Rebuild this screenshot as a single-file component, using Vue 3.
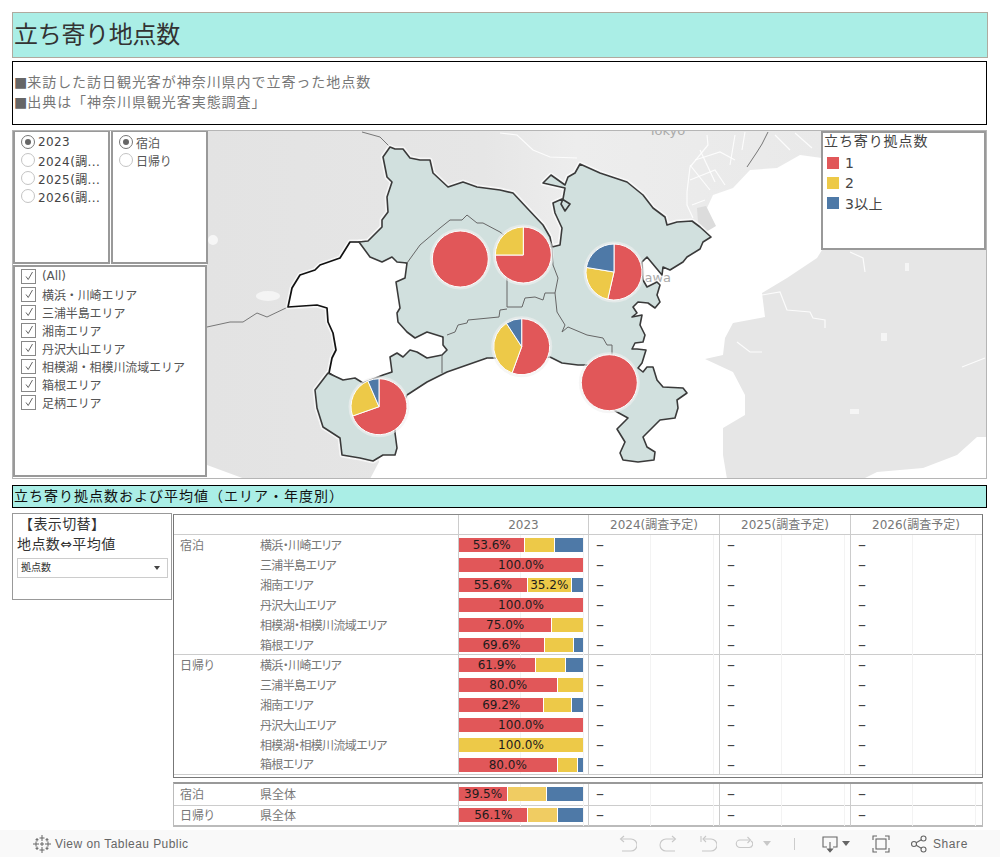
<template>
  <div class="page">
    <div class="dash">
      <h1 class="banner">立ち寄り地点数</h1>

      <div class="desc">
        <p><span class="sq">■</span>来訪した訪日観光客が神奈川県内で立寄った地点数</p>
        <p><span class="sq">■</span>出典は「神奈川県観光客実態調査」</p>
      </div>

      <section class="map">
        <svg class="map-svg" width="975" height="349" viewBox="12 130 975 349">
          <defs>
            <linearGradient id="landGrad" x1="207" x2="822" y1="0" y2="0" gradientUnits="userSpaceOnUse">
              <stop offset="0" stop-color="#e3e3e3" />
              <stop offset="0.45" stop-color="#e6e6e6" />
              <stop offset="0.6" stop-color="#ededed" />
              <stop offset="1" stop-color="#e9e9e9" />
            </linearGradient>
          </defs>
          <rect x="12" y="130" width="975" height="349" fill="#fff" />
          <polygon :points="landWest" fill="url(#landGrad)" />
          <polygon :points="landEast" fill="#e6e6e6" />
          <polygon points="697,208 706,206 716,226 706,232 698,222" fill="#dcdcdc" />
          <polyline v-for="(r, i) in roads" :key="i" :points="r" class="road" />
          <circle cx="213" cy="240" r="5" fill="#f6f6f6" />
          <ellipse cx="268" cy="296" rx="12" ry="5" fill="#f4f4f4" />
          <rect x="881" y="333" width="6" height="8" fill="#f5f5f5" />
          <rect x="850" y="409" width="9" height="5" fill="#f5f5f5" />
          <rect x="905" y="263" width="4" height="8" fill="#f5f5f5" />
          <text x="667" y="135" class="place" text-anchor="middle">Tokyo</text>
          <text x="671" y="282" class="place" text-anchor="end">Kanagawa</text>

          <polyline points="207,327 230,322 243,322 257,313 267,317 288,307" class="border-soft" />
          <polyline points="362,132 380,137 390,147" class="border-soft" />
          <polyline points="747,167 757,152 762,144 768,132" class="border-soft" />

          <polygon :points="whiteArea" class="halo" />
          <polygon :points="kanagawa" class="halo" />
          <polygon :points="whiteArea" fill="#fff" stroke="#111" stroke-width="1.7" stroke-linejoin="round" />
          <polygon :points="kanagawa" fill="#d1e0de" stroke="#3a3a3a" stroke-width="1.6" stroke-linejoin="round" />
          <polyline v-for="(l, i) in regionLines" :key="'l' + i" :points="l" class="region" />

          <g v-for="(p, i) in pies" :key="'p' + i">
            <circle :cx="p.x" :cy="p.y" r="30.5" fill="#f0f0f0" opacity="0.6" />
            <path v-for="s in p.slices" :key="s.color" :d="s.d" :fill="s.color" stroke="#fff" stroke-width="1" />
          </g>
        </svg>

        <div class="filters">
          <div class="filter-top">
            <div class="panel panel-year">
              <label v-for="(y, i) in years" :key="y" class="opt">
                <span class="radio" :class="{ on: i === 0 }"></span>{{ y }}
              </label>
            </div>
            <div class="panel panel-stay">
              <label v-for="(s, i) in stayTypes" :key="s" class="opt opt-stay">
                <span class="radio" :class="{ on: i === 0 }"></span>{{ s }}
              </label>
            </div>
          </div>
          <div class="panel panel-area">
            <label v-for="a in areaFilter" :key="a" class="opt opt-area">
              <span class="check">
                <svg width="12" height="12" viewBox="0 0 12 12"><path d="M3 6.500 5.200 9.500 9.500 2" fill="none" stroke="#666" stroke-width="1" /></svg>
              </span>{{ a }}
            </label>
          </div>
        </div>

        <div class="panel legend">
          <div class="legend-title">立ち寄り拠点数</div>
          <div v-for="l in legend" :key="l.label" class="legend-row">
            <span class="swatch" :style="{ background: l.color }"></span>{{ l.label }}
          </div>
        </div>
      </section>

      <h2 class="section-title">立ち寄り拠点数および平均値（エリア・年度別）</h2>

      <div class="lower">
        <div class="switcher">
          <div class="sw-line sw-head">【表示切替】</div>
          <div class="sw-line">地点数⇔平均値</div>
          <div class="select">拠点数<span class="select-caret"></span></div>
        </div>

        <div class="tables">
          <div class="table table-main">
            <div class="row row-head">
              <div class="cell-label"></div>
              <div v-for="h in yearHeads" :key="h" class="cell-head">{{ h }}</div>
            </div>
            <div v-for="(r, i) in rows" :key="i" class="row" :class="{ 'row-group': i === 6 }">
              <div class="cell-label">
                <span class="stay">{{ r.stay }}</span><span class="area">{{ r.area }}</span>
              </div>
              <div class="cell-val">
                <div class="bar">
                  <span v-for="(s, j) in r.parts" :key="j" class="seg" :style="{ width: s.w + '%', background: s.c }">{{ s.t }}</span>
                </div>
              </div>
              <div v-for="n in 3" :key="n" class="cell-val"><span class="dash-mark">–</span></div>
            </div>
          </div>

          <div class="table table-total">
            <div v-for="(r, i) in totals" :key="i" class="row row-total" :class="{ 'row-group': i === 1 }">
              <div class="cell-label">
                <span class="stay">{{ r.stay }}</span><span class="area">{{ r.area }}</span>
              </div>
              <div class="cell-val">
                <div class="bar">
                  <span v-for="(s, j) in r.parts" :key="j" class="seg" :style="{ width: s.w + '%', background: s.c }">{{ s.t }}</span>
                </div>
              </div>
              <div v-for="n in 3" :key="n" class="cell-val"><span class="dash-mark">–</span></div>
            </div>
          </div>
        </div>
      </div>
    </div>

    <footer class="toolbar">
      <div class="tb-left">
        <svg width="18" height="18" viewBox="0 0 18 18" class="tb-logo">
          <path d="M9 0v6M6.500 3h5M9 12v6M6.500 15h5M0 9h6M3 6.500v5M12 9h6M15 6.500v5M4 3v3.500M2.500 4.700h3M14 3v3.500M12.500 4.700h3M4 11.500V15M2.500 13.300h3M14 11.500V15M12.500 13.300h3M9 7v4M7 9h4" />
        </svg>
        <span>View on Tableau Public</span>
      </div>
      <div class="tb-right">
        <svg class="ic ic-off" width="18" height="18" viewBox="0 0 18 18"><path d="M2 4h10a6 6 0 0 1 0 12H3" /><path d="M5 1 1.500 4 5 7" class="solid" /></svg>
        <svg class="ic ic-off gap-redo" width="18" height="18" viewBox="0 0 18 18"><path d="M16 4H7a6 6 0 0 0 0 12h9" /><path d="M13 1l3.500 3L13 7" class="solid" /></svg>
        <svg class="ic ic-off gap-revert" width="18" height="18" viewBox="0 0 18 18"><path d="M2 1v6M5 4h7a6 6 0 0 1 0 12H3" /><path d="M7 1 4 4l3 3" class="solid" /></svg>
        <svg class="ic ic-off gap-refresh" width="18" height="18" viewBox="0 0 18 18"><path d="M15 5H5a3.500 3.500 0 0 0 0 7.500h9a3.500 3.500 0 0 0 2-6.500" /><path d="M12.500 2l3 3-3 3" class="solid" /></svg>
        <span class="caret caret-off"></span>
        <span class="sep"></span>
        <svg class="ic ic-on gap-down" width="18" height="18" viewBox="0 0 18 18"><path d="M6 12H2V2h14v10h-4M9 7v9" /><path d="M6.500 14 9 17l2.500-3z" class="fill" /></svg>
        <span class="caret caret-on"></span>
        <svg class="ic ic-on gap-full" width="18" height="18" viewBox="0 0 18 18"><path d="M1 5V1h4M13 1h4v4M17 13v4h-4M5 17H1v-4" /><rect x="4" y="4" width="10" height="10" /></svg>
        <svg class="ic ic-on gap-share" width="18" height="18" viewBox="0 0 18 18"><circle cx="4" cy="9" r="2.500" /><circle cx="13.500" cy="3.500" r="2.500" /><circle cx="13.500" cy="14.500" r="2.500" /><path d="M6.200 7.800 11.300 4.800M6.200 10.200l5.100 3" /></svg>
        <span class="share">Share</span>
      </div>
    </footer>
  </div>
</template>

<script setup>
  const RED = '#e15759';
  const YEL = '#edc948';
  const YEL2 = '#f0cc62';
  const BLU = '#4e79a7';

  const years = ['2023', '2024(調...', '2025(調...', '2026(調...'];
  const stayTypes = ['宿泊', '日帰り'];
  const areaFilter = ['(All)', '横浜・川崎エリア', '三浦半島エリア', '湘南エリア', '丹沢大山エリア', '相模湖・相模川流域エリア', '箱根エリア', '足柄エリア'];
  const yearHeads = ['2023', '2024(調査予定)', '2025(調査予定)', '2026(調査予定)'];
  const legend = [
    { label: '1', color: RED },
    { label: '2', color: YEL },
    { label: '3以上', color: BLU }
  ];

  // map outlines, traced in page coordinates
  const landWest = '207,130 822,130 822,158 800,155 777,168 750,170 733,188 713,195 707,208 715,225 680,228 600,300 450,340 350,430 380,450 379,462 370,479 245,479 207,465';
  const landEast = '987,130 987,437 977,437 957,455 923,468 877,472 863,479 727,479 723,455 723,428 745,415 745,395 733,372 705,359 723,355 725,338 733,323 765,317 762,293 787,278 817,258 822,250 987,250';
  const whiteArea = '359,242 350,242 340,258 320,265 315,270 300,275 292,288 288,307 317,305 327,308 328,322 333,333 336,350 332,358 329,373 345,384 363,387 392,378 447,362 452,345 443,337 407,263';
  const kanagawa = '390,147 395,149 403,149 410,158 420,160 430,160 433,173 448,187 463,182 477,187 500,190 513,193 527,208 543,225 550,237 552,247 560,245 562,228 555,213 553,203 562,199 570,204 565,211 561,204 563,199 565,188 543,183 551,175 565,185 568,177 575,173 580,164 600,173 627,182 643,195 653,208 665,217 667,225 677,222 692,221 700,227 711,237 703,242 700,249 687,257 683,262 670,270 663,267 662,275 647,257 642,262 643,280 647,287 657,282 660,285 657,295 660,302 655,308 648,303 638,302 633,307 637,313 632,317 642,315 640,325 645,335 643,342 635,343 632,349 637,349 646,350 642,363 638,368 643,372 647,367 653,367 657,380 663,387 683,388 687,393 677,400 678,408 675,418 660,420 643,437 647,447 655,452 654,460 638,462 623,460 620,453 625,442 617,429 628,418 617,412 600,400 587,365 578,365 562,363 550,357 520,362 500,358 487,358 447,372 427,382 407,395 395,420 395,433 397,448 395,455 383,455 373,461 360,458 342,455 340,438 323,427 317,408 315,390 328,373 343,380 355,378 363,383 383,375 392,372 390,357 397,353 403,357 410,350 417,352 427,358 442,355 447,350 443,345 443,337 427,332 415,338 407,332 398,322 397,313 400,308 396,282 405,278 407,263 397,262 392,257 382,262 370,257 359,242 368,241 382,227 382,220 388,212 387,197 392,182 387,177 383,157';
  const regionLines = [
    '407,263 420,245 440,228 450,220 462,220 467,215 477,223 483,223 500,232 510,240 552,247',
    '552,247 553,265 558,278 555,293 557,312 565,325 562,332 568,327 587,335 603,338 607,345 612,345 612,355',
    '555,293 545,293 543,300 535,297 525,298 522,307 507,307 507,278',
    '507,309 500,310 499,317 468,320 467,323 458,325 455,332 447,335',
    '442,355 442,373'
  ];
  const roads = [
    '500,133 517,135 533,150 550,157 577,158',
    '707,135 708,145 690,167 687,192 687,205 693,218',
    '695,160 720,152 735,160',
    '690,180 715,170 725,185',
    '690,165 710,190',
    '700,150 715,182',
    '692,205 705,200',
    '745,132 742,150',
    '735,135 730,165',
    '775,135 790,150',
    '795,133 812,148',
    '762,295 780,292 787,310 810,312 813,318 825,320 825,328',
    '737,342 750,352 762,352',
    '850,252 863,258 865,272',
    '962,367 985,358',
    '790,272 815,258'
  ];

  // Draws pie slices clockwise from twelve o'clock
  function makePie(x, y, parts) {
    const r = 28;
    let start = 0;
    const slices = parts.map(([share, color]) => {
      if (share >= 100) {
        return { color, d: `M${x - r} ${y}a${r} ${r} 0 1 0 ${r * 2} 0a${r} ${r} 0 1 0 ${-r * 2} 0z` };
      }
      const a0 = (start / 100) * Math.PI * 2;
      const a1 = ((start + share) / 100) * Math.PI * 2;
      start += share;
      const large = share > 50 ? 1 : 0;
      const x0 = x + r * Math.sin(a0);
      const y0 = y - r * Math.cos(a0);
      const x1 = x + r * Math.sin(a1);
      const y1 = y - r * Math.cos(a1);
      return { color, d: `M${x} ${y}L${x0.toFixed(2)} ${y0.toFixed(2)}A${r} ${r} 0 ${large} 1 ${x1.toFixed(2)} ${y1.toFixed(2)}Z` };
    });
    return { x, y, slices };
  }

  const pies = [
    makePie(460.3, 259, [[100, RED]]),
    makePie(523.3, 255, [[75, RED], [25, YEL]]),
    makePie(614, 272, [[53.6, RED], [24, YEL], [22.4, BLU]]),
    makePie(521.7, 346.7, [[55.6, RED], [35.2, YEL], [9.2, BLU]]),
    makePie(609.3, 382.7, [[100, RED]]),
    makePie(379, 406.7, [[69.6, RED], [23.9, YEL], [6.5, BLU]])
  ];

  function parts(red, yel, blu, opts = {}) {
    const out = [];
    if (red) out.push({ w: red, c: RED, t: red.toFixed(1) + '%' });
    if (yel) out.push({ w: yel, c: opts.yel || YEL, t: opts.showYel ? yel.toFixed(1) + '%' : '' });
    if (blu) out.push({ w: blu, c: BLU, t: '' });
    return out;
  }

  const rows = [
    { stay: '宿泊', area: '横浜・川崎エリア', parts: parts(53.6, 23.8, 22.6) },
    { stay: '', area: '三浦半島エリア', parts: parts(100) },
    { stay: '', area: '湘南エリア', parts: parts(55.6, 35.2, 9.2, { showYel: true }) },
    { stay: '', area: '丹沢大山エリア', parts: parts(100) },
    { stay: '', area: '相模湖・相模川流域エリア', parts: parts(75, 25) },
    { stay: '', area: '箱根エリア', parts: parts(69.6, 23, 7.4) },
    { stay: '日帰り', area: '横浜・川崎エリア', parts: parts(61.9, 23.8, 14.3) },
    { stay: '', area: '三浦半島エリア', parts: parts(80, 20) },
    { stay: '', area: '湘南エリア', parts: parts(69.2, 21.6, 9.2) },
    { stay: '', area: '丹沢大山エリア', parts: parts(100) },
    { stay: '', area: '相模湖・相模川流域エリア', parts: parts(0, 100, 0, { showYel: true }) },
    { stay: '', area: '箱根エリア', parts: parts(80, 15.6, 4.4) }
  ];

  const totals = [
    { stay: '宿泊', area: '県全体', parts: parts(39.5, 31, 29.5, { yel: YEL2 }) },
    { stay: '日帰り', area: '県全体', parts: parts(56.1, 23.2, 20.7, { yel: YEL2 }) }
  ];
</script>

<style scoped>
  .page {
    width: 1000px;
    height: 857px;
    overflow: hidden;
    background: #fff;
    font-family: "DejaVu Sans", "Noto Sans CJK JP", sans-serif;
    color: #333;
  }

  .dash {
    height: 830px;
    padding: 12px 0 0 12px;
    box-sizing: border-box;
  }

  /* --- Top banners --- */
  .banner {
    width: 976px;
    height: 46px;
    margin: 0;
    box-sizing: border-box;
    border: 1px solid #b0aa9f;
    background: #aaeee6;
    padding-left: 1px;
    font-size: 24px;
    line-height: 44px;
    letter-spacing: -0.3px;
    font-weight: 400;
    color: #333;
  }

  .desc {
    width: 975px;
    height: 64px;
    margin-top: 3px;
    box-sizing: border-box;
    border: 1px solid #000;
    padding: 10px 0 0 1px;
    font-size: 14px;
    line-height: 20px;
    letter-spacing: 0.95px;
    color: #777;
  }

  .desc p {
    margin: 0;
  }

  .sq {
    color: #666;
    letter-spacing: 0;
  }

  /* --- Map --- */
  .map {
    position: relative;
    width: 975px;
    height: 349px;
    margin-top: 5px;
    box-sizing: border-box;
    overflow: hidden;
  }

  .map::after {
    content: "";
    position: absolute;
    inset: 0;
    border: 1px solid #b5b5b5;
    pointer-events: none;
  }

  .map-svg {
    display: block;
  }

  .road {
    fill: none;
    stroke: #fff;
    stroke-width: 1.2;
    opacity: 0.85;
  }

  .place {
    font-size: 13px;
    fill: #aaa;
    font-family: "DejaVu Sans", sans-serif;
  }

  .border-soft {
    fill: none;
    stroke: #777;
    stroke-width: 1;
  }

  .halo {
    fill: none;
    stroke: #fff;
    stroke-width: 5;
    stroke-linejoin: round;
    opacity: 0.65;
  }

  .region {
    fill: none;
    stroke: #666;
    stroke-width: 1;
  }

  .panel {
    box-sizing: border-box;
    border: 2px solid #999;
    background: #fff;
  }

  .filters {
    position: absolute;
    left: 1px;
    top: 0;
    display: flex;
    flex-direction: column;
    gap: 1px;
  }

  .filter-top {
    display: flex;
    gap: 1px;
  }

  .panel-year,
  .panel-stay {
    width: 97px;
    height: 134px;
    padding-top: 1px;
  }

  .panel-area {
    width: 194px;
    height: 212px;
  }

  .opt {
    display: flex;
    align-items: center;
    height: 18px;
    padding-left: 6px;
    font-size: 12px;
    letter-spacing: 0.4px;
    color: #444;
    white-space: nowrap;
  }

  .opt-stay,
  .opt-area {
    letter-spacing: -0.1px;
    color: #555;
  }

  .radio {
    position: relative;
    width: 12px;
    height: 12px;
    margin-right: 3px;
    border: 1px solid #c4c4c4;
    border-radius: 50%;
    flex-shrink: 0;
  }

  .radio.on {
    border-color: #777;
  }

  .radio.on::after {
    content: "";
    position: absolute;
    inset: 3px;
    border-radius: 50%;
    background: #666;
  }

  .check {
    display: flex;
    align-items: center;
    justify-content: center;
    width: 13px;
    height: 13px;
    margin-right: 6px;
    border: 1px solid #888;
    flex-shrink: 0;
  }

  .legend {
    position: absolute;
    left: 809px;
    top: 1px;
    width: 165px;
    height: 119px;
    padding: 0 0 0 1px;
    font-size: 14px;
    color: #444;
  }

  .legend-title {
    height: 20px;
    line-height: 16px;
    letter-spacing: 0.9px;
    white-space: nowrap;
  }

  .legend-row {
    display: flex;
    align-items: center;
    height: 20px;
    padding-left: 3px;
    letter-spacing: 0.3px;
  }

  .swatch {
    width: 12px;
    height: 12px;
    margin-right: 6px;
  }

  /* --- Lower section --- */
  .section-title {
    width: 975px;
    height: 23px;
    margin: 6px 0 0;
    box-sizing: border-box;
    border: 1px solid #000;
    background: #aaeee6;
    padding-left: 1px;
    font-size: 14px;
    line-height: 20px;
    letter-spacing: 1px;
    font-weight: 400;
    color: #111;
    white-space: nowrap;
  }

  .lower {
    display: flex;
    margin-top: 5px;
  }

  .switcher {
    width: 160px;
    height: 87px;
    box-sizing: border-box;
    border: 1px solid #999;
    padding: 0 3px 0 4px;
    font-size: 14px;
    color: #333;
  }

  .sw-line {
    height: 20px;
    line-height: 20px;
    letter-spacing: 0.4px;
  }

  .sw-head {
    padding-left: 2px;
  }

  .select {
    position: relative;
    height: 20px;
    margin-top: 4px;
    box-sizing: border-box;
    border: 1px solid #ccc;
    padding-left: 3px;
    font-size: 10px;
    line-height: 17px;
  }

  .select-caret {
    position: absolute;
    right: 7px;
    top: 7px;
    border-left: 3px solid transparent;
    border-right: 3px solid transparent;
    border-top: 4px solid #444;
  }

  .tables {
    margin-left: 1px;
    padding-top: 1px;
  }

  .table {
    width: 810px;
    box-sizing: border-box;
    font-feature-settings: "palt";
  }

  .table-main {
    height: 264px;
    border: 1px solid #777;
    border-top-color: #888;
    padding-bottom: 2px;
  }

  .table-main .area {
    letter-spacing: -0.65px;
  }

  .table-total {
    height: 45px;
    margin-top: 4px;
    border: 2px solid #bbb;
    border-top-color: #999;
    border-left-width: 1px;
    border-right-width: 1px;
  }

  .row {
    display: grid;
    grid-template-columns: 284px 130px 131px 131px 131px;
    height: 20px;
  }

  .row-head {
    height: 19px;
    border-bottom: 1px solid #ccc;
    box-sizing: content-box;
  }

  .row-group {
    box-shadow: 0 -1px 0 #ccc;
  }

  .table-main .row:last-child {
    border-bottom: 1px solid #ccc;
    height: 19px;
    box-sizing: content-box;
  }

  .row-total {
    height: 21px;
  }

  .row-total.row-group {
    box-shadow: inset 0 1px 0 #ccc;
  }

  .cell-label {
    display: flex;
    align-items: center;
    padding: 0 0 2px 6px;
    font-size: 12px;
    color: #777;
    white-space: nowrap;
  }

  .stay {
    width: 80px;
    flex-shrink: 0;
  }

  .cell-head {
    border-left: 1px solid #ccc;
    font-size: 12px;
    line-height: 20px;
    text-align: center;
    color: #777;
    white-space: nowrap;
  }

  .cell-val {
    box-sizing: border-box;
    border-left: 1px solid #ccc;
    padding-top: 3px;
    background-image: linear-gradient(#f3f3f3, #f3f3f3), linear-gradient(#f3f3f3, #f3f3f3);
    background-size: 1px 100%;
    background-position: 61px 0, 124px 0;
    background-repeat: no-repeat;
  }

  .bar {
    display: flex;
    width: 124px;
    height: 14px;
    gap: 1px;
  }

  .seg {
    display: block;
    min-width: 0;
    flex-shrink: 1;
    font-size: 12px;
    line-height: 14px;
    text-align: center;
    color: #1c1c1c;
    white-space: nowrap;
    overflow: hidden;
    font-feature-settings: normal;
  }

  .dash-mark {
    display: block;
    padding-left: 7px;
    font-size: 16px;
    line-height: 14px;
    color: #444;
  }

  /* --- Bottom toolbar --- */
  .toolbar {
    display: flex;
    align-items: center;
    justify-content: space-between;
    height: 27px;
    background: #f9f9f9;
    font-family: "Liberation Sans", Arial, sans-serif;
    font-size: 12px;
    color: #666;
    letter-spacing: 0.45px;
  }

  .tb-left {
    display: flex;
    align-items: center;
    padding-left: 33px;
  }

  .tb-logo {
    margin-right: 4px;
  }

  .tb-logo path {
    fill: none;
    stroke: #666;
    stroke-width: 1;
  }

  .tb-right {
    display: flex;
    align-items: center;
    padding-right: 32px;
  }

  .ic path,
  .ic rect,
  .ic circle {
    fill: none;
    stroke-width: 1.1;
  }

  .ic-off path {
    stroke: #c8c8c8;
  }

  .ic-on path,
  .ic-on rect,
  .ic-on circle {
    stroke: #666;
  }

  .ic path.fill {
    fill: #666;
  }

  .gap-redo,
  .gap-revert {
    margin-left: 22px;
  }

  .gap-refresh {
    margin-left: 18px;
  }

  .caret {
    width: 0;
    height: 0;
    border-left: 4px solid transparent;
    border-right: 4px solid transparent;
  }

  .caret-off {
    margin-left: 10px;
    border-top: 5px solid #c8c8c8;
  }

  .caret-on {
    margin-left: 3px;
    border-top: 5px solid #666;
  }

  .sep {
    width: 1px;
    height: 12px;
    margin: 0 26px 0 23px;
    background: #ccc;
  }

  .gap-full {
    margin-left: 22px;
  }

  .gap-share {
    margin-left: 20px;
  }

  .share {
    margin-left: 5px;
    letter-spacing: 0.6px;
  }
</style>

<style>
  html, body {
    margin: 0;
    background: #fff;
  }
</style>
